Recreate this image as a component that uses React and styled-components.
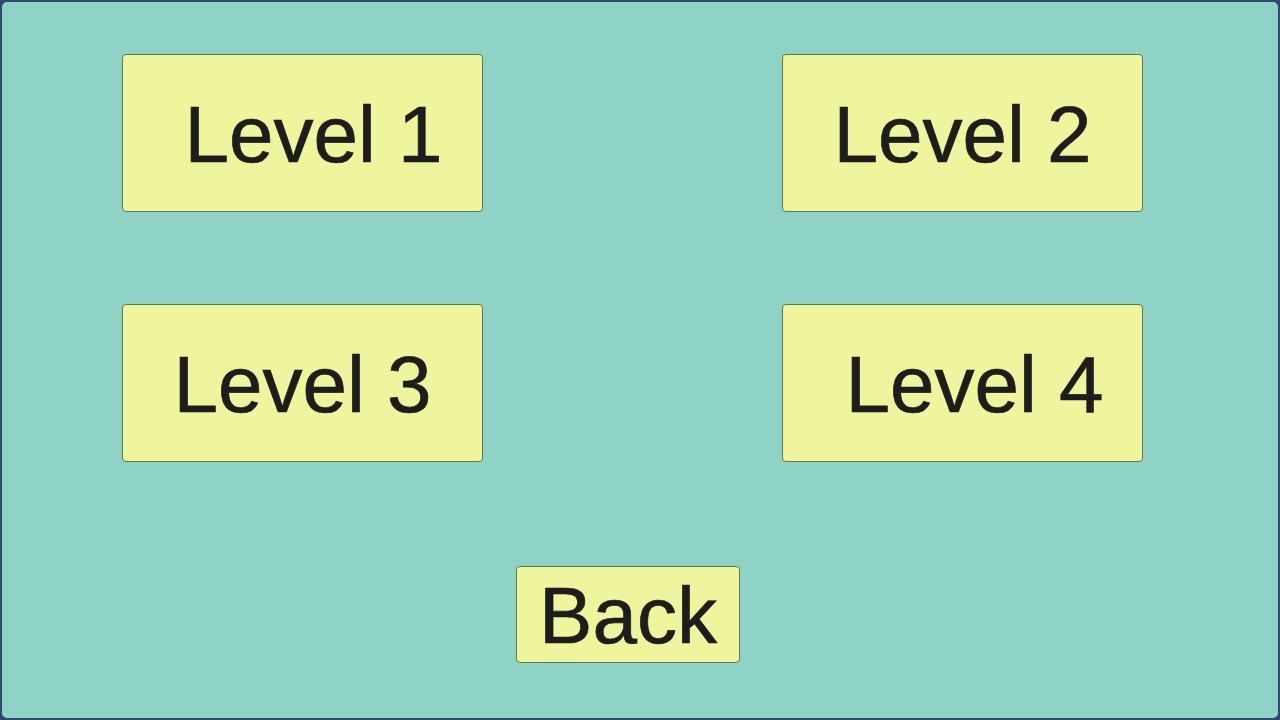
import React from "react";
import styled, { createGlobalStyle } from "styled-components";

const GlobalStyle = createGlobalStyle`
  html, body {
    margin: 0;
    padding: 0;
    background: #2e4b6a;
  }
  * {
    box-sizing: border-box;
  }
`;

const Screen = styled.div`
  width: 1280px;
  height: 720px;
  background: #8ed3c5;
  border: 2px solid #2e4b6a;
  border-radius: 7px;
  padding: 52px 0 0 120px;
  display: flex;
  flex-direction: column;
  font-family: "Liberation Sans", Arial, sans-serif;
`;

const LevelGrid = styled.div`
  display: grid;
  grid-template-columns: 361px 361px;
  column-gap: 299px;
  row-gap: 92px;
`;

const MenuButton = styled.button`
  display: flex;
  align-items: center;
  justify-content: center;
  width: ${(p) => p.$width || "361px"};
  height: ${(p) => p.$height || "158px"};
  padding: 3px 0 0 ${(p) => p.$shift || 0}px;
  background: #eef59d;
  border: 1px solid #62784c;
  border-radius: 4px;
  font-family: inherit;
  font-size: 80px;
  line-height: 1;
  color: #1d1d1d;
  -webkit-text-stroke: 0.7px #1d1d1d;
  cursor: pointer;
`;

const BackRow = styled.div`
  display: flex;
  margin-top: 104px;
  padding-left: 394px;
`;

const levels = [
  { label: "Level 1", shift: 22 },
  { label: "Level 2", shift: 0 },
  { label: "Level 3", shift: 0 },
  { label: "Level 4", shift: 24 },
];

const App = () => {
  return (
    <>
      <GlobalStyle />
      <Screen>
        <LevelGrid>
          {levels.map((l) => (
            <MenuButton key={l.label} $shift={l.shift}>
              {l.label}
            </MenuButton>
          ))}
        </LevelGrid>
        <BackRow>
          <MenuButton $width="224px" $height="97px">
            Back
          </MenuButton>
        </BackRow>
      </Screen>
    </>
  );
};

export default App;
